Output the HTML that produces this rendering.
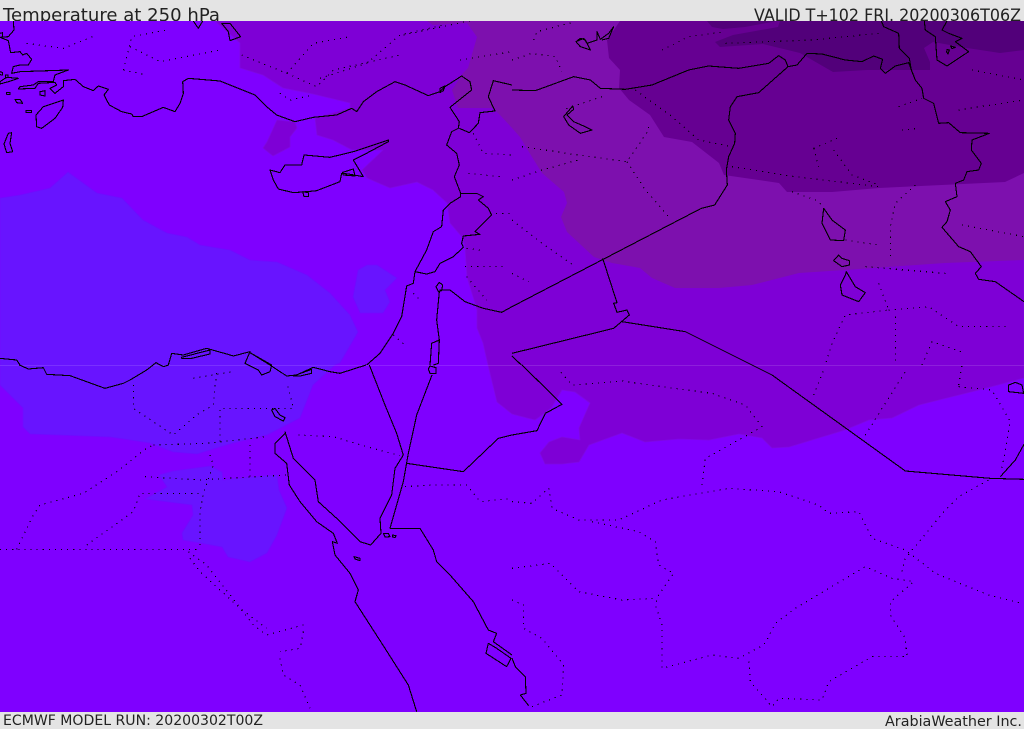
<!DOCTYPE html>
<html><head><meta charset="utf-8"><title>Temperature at 250 hPa</title>
<style>
html,body{margin:0;padding:0;background:#e4e4e4;width:1024px;height:729px;overflow:hidden}
svg{display:block}
.c path{fill:none;stroke:#000;stroke-width:3.3;stroke-linejoin:round;shape-rendering:crispEdges}
.d path{fill:none;stroke:#000;stroke-width:3.3;stroke-dasharray:3.3 15;shape-rendering:crispEdges}
text{font-family:"DejaVu Sans","Liberation Sans",sans-serif;fill:#222}
</style></head><body>
<svg width="1024" height="729" viewBox="0 0 1024 729" xmlns="http://www.w3.org/2000/svg">
<rect width="1024" height="729" fill="#e4e4e4"/>
<text x="3" y="21" font-size="17.5" textLength="217" lengthAdjust="spacingAndGlyphs">Temperature at 250 hPa</text>
<text x="754" y="21" font-size="16.5" textLength="267" lengthAdjust="spacingAndGlyphs">VALID T+102 FRI. 20200306T06Z</text>
<text x="3" y="725" font-size="14" textLength="260" lengthAdjust="spacingAndGlyphs">ECMWF MODEL RUN: 20200302T00Z</text>
<text x="885" y="726" font-size="14" textLength="137" lengthAdjust="spacingAndGlyphs">ArabiaWeather Inc.</text>
<svg x="0" y="21" width="1024" height="691" viewBox="0 21 1024 691">
<rect x="0" y="0" width="1024" height="729" fill="#7f00ff"/>
<!-- blue -->
<g fill="#6814ff" stroke="#7209ff" stroke-width=".8" stroke-linejoin="round">
<path d="M0 198 20 195 50 188 68 172 97 193 122 198 143 220 167 233 187 237 200 245 230 250 250 260 277 262 307 275 330 293 350 315 358 332 340 363 335 365 313 385 300 418 267 435 233 443 197 454 173 452 150 443 110 437 30 434 23 427 23 408 0 385Z"/>
<path d="M159 475 173 471 210 466 222 472 223 480 253 477 277 475 279 490 287 508 277 535 267 553 250 562 228 557 222 547 183 540 182 533 193 515 192 505 145 499 167 487Z"/>
<path d="M367 265 377 265 397 278 385 290 390 302 383 313 360 313 353 297 358 270Z"/>
</g>
<!-- L1 -->
<g fill="#7e00d6" stroke="#7f08e2" stroke-width=".8" stroke-linejoin="round">
<path d="M215 21 240 43 240 68 263 75 283 88 313 94 350 103 350 108 315 118 317 135 333 140 352 150 383 150 362 170 367 178 390 188 417 182 433 190 447 203 450 223 462 237 465 247 467 277 477 310 477 328 483 343 488 365 497 402 512 414 535 420 545 413 552 407 562 390 575 392 590 403 579 428 580 440 562 437 549 442 540 453 545 464 562 464 579 462 589 445 622 433 645 442 679 439 709 440 739 434 762 438 772 448 789 447 845 430 869 420 892 418 919 405 979 390 1024 378 1024 21Z"/>
<path d="M277 120 267 142 263 148 273 156 290 147 290 137 297 128 295 122Z"/>
</g>
<!-- L2 -->
<path fill="#7d10ae" d="M427 21 433 25 467 23 477 37 468 68 463 73 452 90 458 108 477 108 493 108 500 115 512 128 520 137 532 157 542 173 564 192 567 203 561 217 567 232 594 257 612 263 640 268 652 278 675 288 719 288 752 285 799 273 845 270 945 263 1024 260 1024 21Z"/>
<!-- L3 -->
<path fill="#660092" d="M620 21 607 40 609 58 620 70 619 88 629 100 650 115 664 137 692 142 719 163 724 175 779 183 787 192 832 192 879 188 1005 182 1024 173 1024 21Z"/>
<!-- L4 -->
<g fill="#52007a">
<path d="M707 21 712 27 723 29 745 27 777 21Z"/>
<path d="M780 21 778 27 733 35 715 42 720 47 763 44 800 53 833 72 867 70 930 70 930 62 924 48 933 42 967 48 1000 53 1024 50 1024 21Z"/>
</g>
<rect x="0" y="365" width="1024" height="1" fill="#fff" opacity=".12"/>

<!-- dotted -->
<g class="d" transform="scale(.33333)">
<path d="M80 130 190 145 290 105"/><path d="M370 210 395 110 500 90"/><path d="M390 140 480 185 660 150"/><path d="M370 210 440 225"/>
<path d="M725 165 860 220 940 130 1050 110"/><path d="M860 220 950 260 1000 210 1200 165"/><path d="M840 280 870 300 940 285"/>
<path d="M960 235 1100 190 1200 105 1330 75"/><path d="M1210 105 1420 60"/><path d="M1380 180 1536 155"/>
<path d="M1420 400 1450 460 1536 465"/><path d="M1405 520 1500 530"/><path d="M1400 745 1440 750"/><path d="M1395 800 1520 800"/><path d="M1400 830 1460 900"/><path d="M1470 640 1536 640"/>
<path d="M1240 880 1260 900"/><path d="M1180 1005 1220 1040"/>
</g>
<g class="d" transform="translate(512 0) scale(.33333)">
<path d="M0 180 60 160 130 170 150 215"/><path d="M65 120 75 95 190 65"/><path d="M30 440 200 465 345 485 410 390 410 370"/><path d="M0 540 90 510 200 480"/>
<path d="M345 485 400 570 470 650"/><path d="M270 290 150 330"/><path d="M370 270 480 350 560 420 660 440"/><path d="M660 500 850 530 1100 560"/>
<path d="M840 575 910 600 935 620"/><path d="M905 445 975 415"/><path d="M905 445 920 500"/><path d="M965 450 1020 525 1100 555"/>
<path d="M1210 555 1150 610 1135 680 1135 770"/><path d="M1000 720 1100 735"/><path d="M0 660 90 730 190 800"/><path d="M0 820 50 845"/>
<path d="M1350 675 1536 710"/><path d="M1160 320 1230 295"/><path d="M1340 330 1536 300"/><path d="M1170 390 1220 385"/><path d="M1060 800 1300 820"/>
<path d="M1100 850 1130 930 1000 945 960 1030 940 1095"/><path d="M1130 930 1250 920 1340 980 1480 980"/><path d="M1150 950 1150 1095"/><path d="M1230 1095 1260 1025 1360 1060"/>
<path d="M450 150 530 110 640 95"/><path d="M640 130 900 120 1100 100"/><path d="M1380 210 1536 240"/>
</g>
<g class="d" transform="translate(0 365) scale(.33333)">
<path d="M0 553 600 553"/><path d="M50 553 100 450 120 420 250 385 350 320 440 250 460 240"/><path d="M260 540 400 440 420 385 610 385"/><path d="M435 335 600 345 680 340 860 330"/>
<path d="M565 560 620 600 760 780 800 810 910 780"/><path d="M600 540 600 440 610 385 640 300 630 270"/><path d="M570 580 600 620 720 730 800 790"/>
<path d="M840 880 850 930 900 960 930 1030"/><path d="M910 800 900 850 840 860"/><path d="M400 60 400 130 520 210 590 150 640 120 650 20"/><path d="M580 40 700 20"/>
<path d="M660 230 660 130 880 130 860 50"/><path d="M895 210 1000 215 1100 245 1200 272"/><path d="M1215 365 1300 360 1400 360 1440 410 1536 400"/><path d="M750 240 750 340"/>
<path d="M460 240 620 235 800 215"/>
</g>
<g class="d" transform="translate(512 365) scale(.33333)">
<path d="M0 410 60 415 110 370 120 430 200 465 320 465 450 405 650 370 800 380 920 420 950 445 1040 440 1080 520 1180 555 1270 625 1430 690 1530 715"/>
<path d="M570 360 580 280 680 225 750 185 700 120 600 85 450 65 330 48 180 60 140 15"/>
<path d="M240 470 380 500 430 530 440 600 485 625 440 690 430 720 450 780 450 910 600 870 680 880 755 840 770 815 790 775 850 730 950 670 1060 605 1140 640 1205 650 1135 710 1135 750 1180 820 1185 875 1080 875 950 950 930 1005 800 1000 780 1025 715 950 710 880"/>
<path d="M0 610 115 595 200 680 330 705 430 700"/><path d="M0 705 35 720 35 790 90 820 155 900 150 990 60 1025"/>
<path d="M1170 620 1180 580 1300 435 1340 395 1430 345"/><path d="M905 90 935 15"/><path d="M1060 210 1180 20"/><path d="M1340 60 1350 0"/><path d="M1340 65 1440 75 1495 170 1470 310"/>
</g>

<!-- coast -->
<g class="c" transform="scale(.33333)">
<path d="M40 63 42 90 25 110 0 112 25 122 32 158 60 155 68 165 80 160 95 178 85 195 60 195 40 200 35 220 60 215 205 210 165 225 160 245 115 245 100 255 60 260 55 267 105 265 115 250 165 247 170 255 150 265 165 280 190 260 190 242 225 238 250 260 280 272 295 258 325 268 312 285 328 315 365 335 395 342 400 350 425 350 490 322 525 335 540 310 550 280 548 245 565 235 660 243 765 285 800 320 830 345 885 365 940 352 1010 345 1055 325 1070 335 1090 305 1130 275 1185 245 1215 255 1285 287 1320 275 1335 260 1385 228 1410 245 1415 270 1350 322 1378 365 1375 385 1355 395 1340 435 1370 460 1378 495 1363 530 1382 580 1382 590 1350 610 1330 630 1325 680 1300 695 1280 750 1245 815 1240 850 1220 858 1205 950 1180 1000 1140 1060 1100 1095"/>
<path d="M1378 385 1408 398 1435 370 1440 338 1485 333 1465 290 1480 242 1536 255"/>
<path d="M1382 580 1430 580 1450 590 1435 600 1465 625 1475 645 1425 695 1440 703 1390 708 1385 730 1390 742 1360 770 1320 790 1305 815 1280 822 1245 815"/>
<path d="M1318 870 1350 870 1395 905 1450 925 1505 937 1536 920"/><path d="M1318 875 1310 960 1318 1020"/>
<path d="M1318 847 1328 855 1325 872 1315 875 1308 860Z"/><path d="M1290 1095 1295 1030 1318 1020 1315 1090 1300 1095"/>
<path d="M810 510 840 518 855 495 905 495 912 465 990 472 1060 455 1165 420 1165 425 1090 465 1060 480 1090 530 1045 522 1025 520 1020 545 950 572 920 575 880 578 835 567 820 540Z"/>
<path d="M1028 517 1060 507 1065 528 1030 525Z"/><path d="M908 575 925 578 925 590 912 590Z"/>
<path d="M190 300 188 322 165 355 125 385 110 380 108 345 130 320Z"/><path d="M25 400 35 398 30 430 38 455 20 458 12 432Z"/>
<path d="M665 70 690 70 722 110 690 122 685 95Z"/><path d="M580 63 595 85 608 63"/>
<path d="M78 332 95 332 95 338 78 338Z"/><path d="M45 298 60 298 68 310 50 308Z"/><path d="M120 275 135 272 135 288 120 285Z"/><path d="M20 278 30 278 30 283 20 283Z"/>
<path d="M0 245 20 232 55 235 25 245 0 252Z"/><path d="M0 100 8 98 8 112"/><path d="M0 215 8 218 8 225 0 224"/><path d="M16 225 24 225 24 232 16 232Z"/>
<path d="M0 1075 50 1080 60 1095"/>
<path d="M1320 265 1335 258 1330 272 1320 278Z"/>
</g>
<g class="c" transform="translate(512 0) scale(.33333)">
<path d="M0 270 70 272 185 230 235 240 265 265 340 268 420 255 530 210 590 198 680 205 770 190 800 167 820 180 828 200 855 195 885 160 930 162 1000 180 1050 185 1085 168 1112 178 1105 205 1120 220 1150 198 1190 188 1210 240 1230 265 1235 295 1265 310 1280 370 1310 368 1345 398 1432 400 1380 420 1378 450 1408 490 1400 510 1365 515 1355 540 1330 550 1335 590 1300 605 1315 630 1305 665 1290 682 1340 740 1375 755 1408 800 1390 820 1400 838 1450 845 1536 905"/>
<path d="M828 200 740 278 675 290 655 320 650 360 670 400 668 430 650 470 643 510 646 555 608 615 568 625 0 920"/>
<path d="M272 775 315 908 305 910 315 937 345 930 352 945 305 985 0 1060"/><path d="M330 965 520 995 720 1095"/><path d="M0 1068 28 1095"/>
<path d="M1108 63 1115 80 1160 100 1162 145 1192 175 1198 210 1210 240"/>
<path d="M1237 63 1240 90 1270 110 1275 180 1305 198 1370 155 1330 125 1350 115 1310 100 1290 90 1305 63"/>
<path d="M1305 148 1312 150 1308 162 1304 156Z"/><path d="M1316 138 1330 142 1320 146Z"/>
<path d="M192 125 205 115 220 120 235 150 205 140 192 125 215 115 225 130 255 120 255 95 265 118 290 100 305 80 290 115 270 120"/>
<path d="M182 318 155 350 170 375 205 400 240 390 215 378 185 365 165 345 185 328Z"/>
<path d="M935 625 930 670 955 720 995 722 1000 690 960 660Z"/>
<path d="M980 765 965 782 990 800 1012 795 1012 782 990 775Z"/>
<path d="M1003 815 1000 825 985 855 990 885 1040 905 1060 878 1030 860Z"/>
</g>
<g class="c" transform="translate(0 365) scale(.33333)">
<path d="M58 0 85 12 130 8 140 28 210 32 315 70 370 55 390 45 440 15 468 -7 490 5 505 0 515 -35 550 -30 620 -50 680 -33 700 -27 750 -40 735 -5 775 15 785 30 810 20 815 0 750 -37 810 0 860 33 890 30 940 7 990 20 1020 25 1098 0"/>
<path d="M545 -23 630 -45 630 -33 575 -20 545 -20Z"/><path d="M880 33 935 13 935 25 900 33Z"/>
<path d="M1108 0 1155 120 1190 205 1210 270"/>
<path d="M1290 3 1308 8 1308 25 1290 25 1285 12Z"/><path d="M1296 30 1250 150 1225 265 1210 350 1170 490"/>
<path d="M1210 270 1185 310 1175 390 1140 460 1143 505 1112 540 1080 530 1010 460 955 410 945 345 880 280 855 200"/>
<path d="M855 205 825 235 825 265 860 295 868 360 900 410 950 470 1000 505 1012 535 997 530 1005 570 1050 625 1075 675 1065 710 1155 850 1225 960 1250 1040"/>
<path d="M1170 490 1260 490 1300 555 1310 590 1350 630 1420 710 1465 795 1490 805 1480 830 1536 870"/>
<path d="M1465 835 1458 865 1520 905 1533 880 1490 850Z"/>
<path d="M1220 295 1390 320 1495 220 1536 210"/>
<path d="M815 135 825 130 840 150 855 158 850 168 825 155Z"/><path d="M1150 505 1165 505 1170 515 1155 516Z"/><path d="M1178 510 1188 512 1185 518 1178 516Z"/><path d="M1062 575 1080 580 1080 587 1065 582Z"/>
</g>
<g class="c" transform="translate(512 365) scale(.33333)">
<path d="M30 0 150 118 100 145 75 197 0 210"/>
<path d="M720 0 780 30 1180 318 1435 340 1536 343"/>
<path d="M1465 335 1510 285 1536 238"/>
<path d="M1490 60 1510 52 1530 60 1535 85 1490 80Z"/>
<path d="M0 880 10 905 40 935 42 985 25 990 50 1022"/>
</g>
</svg>
</svg>
</body></html>
